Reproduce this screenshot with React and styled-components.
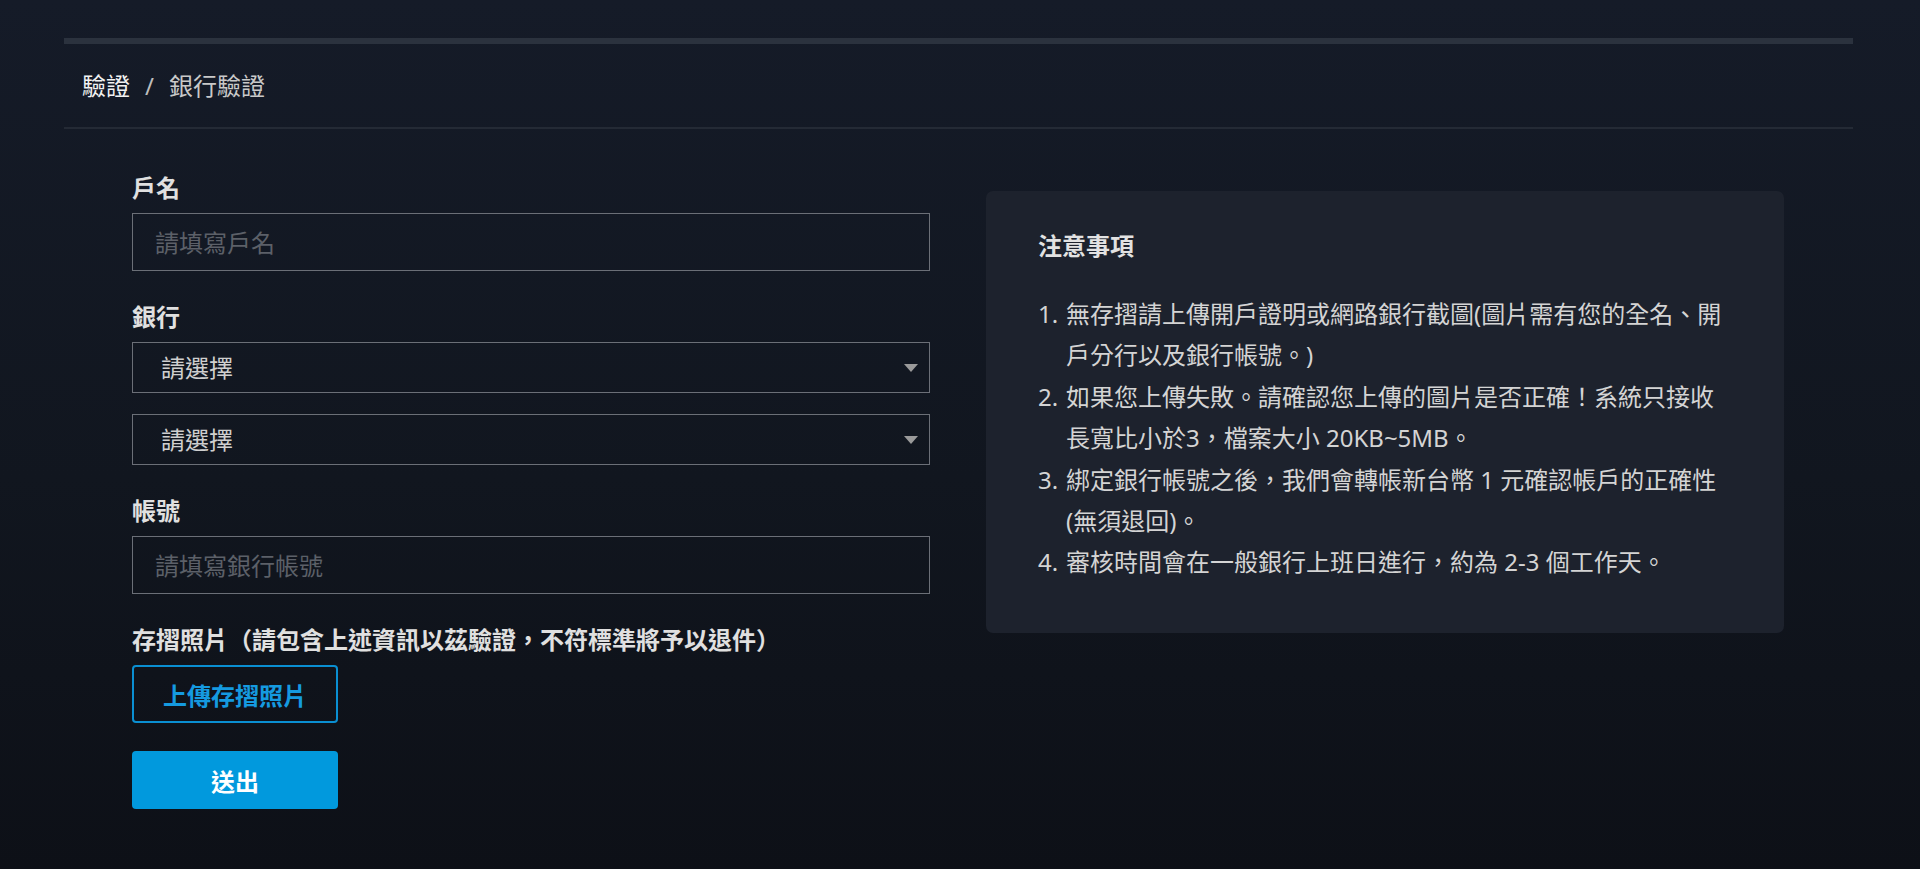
import React from "react";
import styled, { createGlobalStyle } from "styled-components";

const GlobalStyle = createGlobalStyle`
  html, body {
    margin: 0;
    padding: 0;
  }
  body {
    min-height: 100vh;
    background: linear-gradient(180deg, #151b28 0%, #11161f 55%, #0d1017 100%);
    font-family: "Noto Sans", "Noto Sans CJK TC", sans-serif;
    color: #d6d6d6;
    overflow: hidden;
  }
  * {
    box-sizing: border-box;
  }
`;

const notes = [
  "無存摺請上傳開戶證明或網路銀行截圖(圖片需有您的全名、開戶分行以及銀行帳號。)",
  "如果您上傳失敗。請確認您上傳的圖片是否正確！系統只接收長寬比小於3，檔案大小 20KB~5MB。",
  "綁定銀行帳號之後，我們會轉帳新台幣 1 元確認帳戶的正確性(無須退回)。",
  "審核時間會在一般銀行上班日進行，約為 2-3 個工作天。",
];

function App() {
  const [bank, setBank] = React.useState("");
  const [branch, setBranch] = React.useState("");

  return (
    <>
      <GlobalStyle />
      <Page>
        <Card>
          <Breadcrumb>
            <Crumb $active>驗證</Crumb>
            <Slash>/</Slash>
            <Crumb>銀行驗證</Crumb>
          </Breadcrumb>

          <Content>
            <Form onSubmit={(e) => e.preventDefault()}>
              <Group>
                <Label>戶名</Label>
                <Input placeholder="請填寫戶名" />
              </Group>

              <Group>
                <Label>銀行</Label>
                <SelectWrap>
                  <Select value={bank} onChange={(e) => setBank(e.target.value)}>
                    <option value="">請選擇</option>
                  </Select>
                  <Arrow />
                </SelectWrap>
                <SelectWrap $second>
                  <Select value={branch} onChange={(e) => setBranch(e.target.value)}>
                    <option value="">請選擇</option>
                  </Select>
                  <Arrow />
                </SelectWrap>
              </Group>

              <Group>
                <Label>帳號</Label>
                <Input placeholder="請填寫銀行帳號" />
              </Group>

              <Label>存摺照片（請包含上述資訊以茲驗證，不符標準將予以退件）</Label>
              <UploadButton type="button">上傳存摺照片</UploadButton>
              <SubmitButton type="submit">送出</SubmitButton>
            </Form>

            <Notice>
              <NoticeTitle>注意事項</NoticeTitle>
              <NoteList>
                {notes.map((note, index) => (
                  <NoteItem key={index}>
                    <Num>{index + 1}.</Num>
                    <NoteText>{note}</NoteText>
                  </NoteItem>
                ))}
              </NoteList>
            </Notice>
          </Content>
        </Card>
      </Page>
    </>
  );
}

const Page = styled.div`
  padding: 38px 67px 0 64px;
`;

const Card = styled.div`
  border-top: 6px solid #2b323e;
`;

const Breadcrumb = styled.div`
  display: flex;
  align-items: center;
  padding: 25px 18px 24px;
  border-bottom: 2px solid #242a35;
  font-size: 24px;
  line-height: 34px;
`;

const Crumb = styled.span`
  color: ${(props) => (props.$active ? "#f2f2f2" : "#c9c9c9")};
`;

const Slash = styled.span`
  color: #bdbdbd;
  margin: 0 15px;
`;

const Content = styled.div`
  display: grid;
  grid-template-columns: 798px 798px;
  column-gap: 56px;
  align-items: start;
  padding: 42px 69px 0 68px;
`;

const Form = styled.form`
  display: flex;
  flex-direction: column;
  align-items: flex-start;
`;

const Group = styled.div`
  width: 100%;
  margin-bottom: 29px;
`;

const Label = styled.div`
  font-size: 24px;
  line-height: 34px;
  font-weight: 700;
  color: #e0e0e0;
  margin-bottom: 8px;
`;

const Input = styled.input`
  display: block;
  width: 100%;
  height: 58px;
  padding: 0 22px;
  background: transparent;
  border: 1.5px solid #6b6f77;
  border-radius: 0;
  outline: none;
  font-family: inherit;
  font-size: 24px;
  color: #e0e0e0;

  &::placeholder {
    color: #5c6068;
  }
`;

const SelectWrap = styled.div`
  position: relative;
  width: 100%;
  margin-top: ${(props) => (props.$second ? "21px" : "0")};
`;

const Select = styled.select`
  display: block;
  width: 100%;
  height: 51px;
  padding: 0 40px 0 28px;
  background: transparent;
  border: 1.5px solid #6b6f77;
  border-radius: 0;
  outline: none;
  appearance: none;
  font-family: inherit;
  font-size: 24px;
  color: #cfcfcf;

  option {
    background: #151b26;
    color: #cfcfcf;
  }
`;

const Arrow = styled.span`
  position: absolute;
  right: 12px;
  top: 50%;
  margin-top: -4px;
  width: 0;
  height: 0;
  border-left: 7px solid transparent;
  border-right: 7px solid transparent;
  border-top: 8px solid #9a9a9a;
  pointer-events: none;
`;

const BaseButton = styled.button`
  width: 206px;
  height: 58px;
  border-radius: 4px;
  font-family: inherit;
  font-size: 24px;
  font-weight: 700;
  cursor: pointer;
`;

const UploadButton = styled(BaseButton)`
  background: transparent;
  border: 2px solid #0a8fd2;
  color: #159ae0;
`;

const SubmitButton = styled(BaseButton)`
  background: #0199dd;
  border: none;
  color: #ffffff;
  margin-top: 28px;
`;

const Notice = styled.div`
  margin-top: 20px;
  padding: 34px 52px 50px;
  background: #1d222d;
  border-radius: 7px;
`;

const NoticeTitle = styled.div`
  font-size: 24px;
  line-height: 42px;
  font-weight: 700;
  color: #e2e2e2;
  margin-bottom: 26px;
`;

const NoteList = styled.ol`
  margin: 0;
  padding: 0;
  list-style: none;
`;

const NoteItem = styled.li`
  display: flex;
  font-size: 24px;
  line-height: 41.4px;
  color: #d4d4d4;
`;

const Num = styled.span`
  flex: 0 0 28px;
`;

const NoteText = styled.span`
  flex: 1;
`;

export default App;
